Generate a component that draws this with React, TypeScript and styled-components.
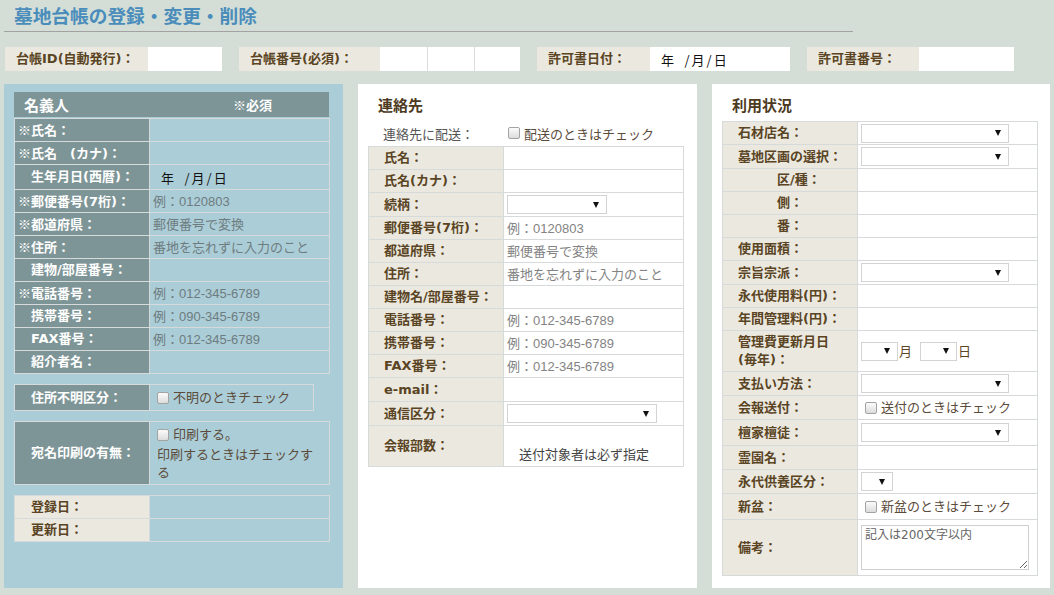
import React from 'react';
import styled, { createGlobalStyle } from 'styled-components';

const GlobalStyle = createGlobalStyle`
  html, body { margin: 0; padding: 0; }
  body {
    background: #d4ded7;
    font-family: "Liberation Sans", "Noto Sans CJK JP", sans-serif;
    font-size: 13px;
    color: #333;
  }
`;

const BROWN = '#5a4424';
const LINE = '#d6dada';
const LABEL_FONT = '"DejaVu Sans", "Noto Sans CJK JP", sans-serif';

const Page = styled.div`
  width: 1054px;
  height: 595px;
  padding-left: 4px;
  box-sizing: border-box;
  overflow: hidden;
`;

const Title = styled.h1`
  margin: 0;
  width: 839px;
  padding: 6px 0 3px 10px;
  font-size: 18.7px;
  line-height: 22px;
  font-weight: bold;
  color: #4a8dbb;
  border-bottom: 1px solid #a2a2a2;
`;

const TopBar = styled.div`
  display: flex;
  gap: 17px;
  margin-top: 15px;
  padding-left: 1px;
  height: 24px;
`;

const TopItem = styled.div`
  display: flex;
`;

const TopLabel = styled.div<{ $w: number }>`
  width: ${p => p.$w}px;
  box-sizing: border-box;
  padding-left: 11px;
  background: #ebe9df;
  color: ${BROWN};
  font-family: ${LABEL_FONT};
  font-weight: bold;
  line-height: 24px;
  white-space: nowrap;
`;

const TopValue = styled.div<{ $w: number }>`
  display: flex;
  align-items: center;
  width: ${p => p.$w}px;
  background: #fff;
  padding-left: 3px;
  box-sizing: border-box;
`;

const Segments = styled.div`
  display: flex;
  gap: 1px;
  background: #dcdcdc;
`;

const Columns = styled.div`
  display: flex;
  gap: 15px;
  margin-top: 13px;
  height: 504px;
`;

const LeftPanel = styled.section`
  width: 339px;
  box-sizing: border-box;
  padding: 8px 14px 0 10px;
  background: #abcdd7;
`;

const WhitePanel = styled.section<{ $w: number }>`
  width: ${p => p.$w}px;
  box-sizing: border-box;
  padding: 12px 0 0 10px;
  background: #fff;
`;

const PanelHeader = styled.div`
  display: flex;
  align-items: center;
  height: 25px;
  margin-bottom: 1px;
  padding-left: 10px;
  background: #7e9597;
  color: #fff;
  font-weight: bold;
`;

const HeaderName = styled.span`
  width: 209px;
  font-size: 15px;
`;

const HeaderNote = styled.span`
  font-size: 13px;
`;

const PanelTitle = styled.h2`
  margin: 0 0 0 10px;
  font-size: 15px;
  line-height: 20px;
  font-weight: bold;
  color: #4d3a1e;
`;

const DeliveryRow = styled.div`
  display: flex;
  align-items: center;
  height: 18px;
  margin: 8px 0 4px 15px;
  color: #555;
`;

const DeliveryLabel = styled.span`
  width: 125px;
`;

const FormGrid = styled.div<{ $w?: number; $gap?: number }>`
  display: grid;
  grid-template-columns: 135px 1fr;
  width: ${p => p.$w ?? 315}px;
  margin-top: ${p => p.$gap ?? 0}px;
  border-top: 1px solid ${LINE};
  border-left: 1px solid ${LINE};
`;

const Label = styled.div<{ $tone: 'slate' | 'beige'; $indent: number; $h: number }>`
  display: flex;
  align-items: center;
  min-height: ${p => p.$h}px;
  padding-left: ${p => p.$indent}px;
  background: ${p => (p.$tone === 'slate' ? '#7e9597' : '#ebe9df')};
  color: ${p => (p.$tone === 'slate' ? '#fff' : BROWN)};
  font-family: ${LABEL_FONT};
  font-weight: bold;
  line-height: 18px;
  white-space: nowrap;
  border-right: 1px solid ${LINE};
  border-bottom: 1px solid ${LINE};
`;

const Mark = styled.span`
  font-family: "Noto Sans CJK JP", sans-serif;
`;

const Value = styled.div<{ $white: boolean; $pad: number; $align: string; $h: number }>`
  display: flex;
  flex-wrap: wrap;
  align-items: ${p => p.$align};
  align-content: ${p => p.$align};
  min-height: ${p => p.$h}px;
  padding: 0 3px 0 ${p => p.$pad}px;
  box-sizing: border-box;
  background: ${p => (p.$white ? '#fff' : 'transparent')};
  border-right: 1px solid ${LINE};
  border-bottom: 1px solid ${LINE};
  line-height: 17px;
`;

const Hint = styled.span<{ $onBlue?: boolean }>`
  color: ${p => (p.$onBlue ? '#6e7c80' : '#838383')};
  white-space: nowrap;
`;

const DateText = styled.span`
  color: #111;
  margin-left: 8px;
  letter-spacing: 2px;
  white-space: pre;
  font-family: "Noto Sans CJK JP", sans-serif;
`;

const CheckText = styled.span`
  display: inline-flex;
  align-items: center;
  color: #5b4b3b;
  white-space: nowrap;
`;

const Check = styled.span`
  display: inline-block;
  width: 12px;
  height: 12px;
  box-sizing: border-box;
  margin-right: 4px;
  border: 1px solid #a3a3a3;
  border-radius: 2px;
  background: linear-gradient(#fbfbfb, #dcdcdc);
`;

const PrintNote = styled.div`
  width: 162px;
  padding: 4px 0 2px;
  color: #5b4b3b;
  line-height: 18px;
`;

const Select = styled.div<{ $w: number }>`
  display: flex;
  align-items: center;
  justify-content: flex-end;
  width: ${p => p.$w}px;
  height: 19px;
  box-sizing: border-box;
  padding-right: 7px;
  border: 1px solid #d3d3d3;
  background: #fff;
  &::after {
    content: '';
    border-left: 3.5px solid transparent;
    border-right: 3.5px solid transparent;
    border-top: 6px solid #111;
  }
`;

const Unit = styled.span`
  color: #5b4424;
  margin: 0 8px 0 1px;
`;

const SendNote = styled.span`
  color: #444;
  margin-bottom: 3px;
`;

const Memo = styled.textarea`
  width: 168px;
  height: 45px;
  box-sizing: border-box;
  margin: 0;
  padding: 1px 3px;
  border: 1px solid #cfcfcf;
  font-family: "DejaVu Sans", "Noto Sans CJK JP", sans-serif;
  font-size: 12px;
  line-height: 16px;
  color: #555;
  &::placeholder { color: #666; }
`;

type FieldProps = {
  label: React.ReactNode;
  tone?: 'slate' | 'beige';
  indent?: number;
  white?: boolean;
  pad?: number;
  align?: string;
  h?: number;
  children?: React.ReactNode;
};

function Field({ label, tone = 'beige', indent = 15, white = true, pad = 3, align = 'center', h = 22, children }: FieldProps) {
  return (
    <>
      <Label $tone={tone} $indent={indent} $h={h}>{label}</Label>
      <Value $white={white} $pad={pad} $align={align} $h={h}>{children}</Value>
    </>
  );
}

const L = (props: FieldProps) => <Field tone="slate" white={false} indent={3} {...props} />;

const Req = ({ children }: { children: React.ReactNode }) => (
  <span><Mark>※</Mark>{children}</span>
);

const DATE = '年\u2002/月/日';

export default function App() {
  return (
    <>
      <GlobalStyle />
      <Page>
        <Title>墓地台帳の登録・変更・削除</Title>

        <TopBar>
          <TopItem>
            <TopLabel $w={143}>台帳ID(自動発行)：</TopLabel>
            <TopValue $w={74} />
          </TopItem>
          <TopItem>
            <TopLabel $w={141}>台帳番号(必須)：</TopLabel>
            <Segments>
              <TopValue $w={47} />
              <TopValue $w={46} />
              <TopValue $w={45} />
            </Segments>
          </TopItem>
          <TopItem>
            <TopLabel $w={113}>許可書日付：</TopLabel>
            <TopValue $w={140}><DateText>{DATE}</DateText></TopValue>
          </TopItem>
          <TopItem>
            <TopLabel $w={112}>許可書番号：</TopLabel>
            <TopValue $w={95} />
          </TopItem>
        </TopBar>

        <Columns>
          <LeftPanel>
            <PanelHeader>
              <HeaderName>名義人</HeaderName>
              <HeaderNote>※必須</HeaderNote>
            </PanelHeader>
            <FormGrid>
              <L label={<Req>氏名：</Req>} />
              <L label={<Req>氏名　(カナ)：</Req>} />
              <L label="生年月日(西暦)：" indent={16} h={24}><DateText>{DATE}</DateText></L>
              <L label={<Req>郵便番号(7桁)：</Req>}><Hint $onBlue>例：0120803</Hint></L>
              <L label={<Req>都道府県：</Req>}><Hint $onBlue>郵便番号で変換</Hint></L>
              <L label={<Req>住所：</Req>}><Hint $onBlue>番地を忘れずに入力のこと</Hint></L>
              <L label="建物/部屋番号：" indent={16} />
              <L label={<Req>電話番号：</Req>}><Hint $onBlue>例：012-345-6789</Hint></L>
              <L label="携帯番号：" indent={16}><Hint $onBlue>例：090-345-6789</Hint></L>
              <L label="FAX番号：" indent={16}><Hint $onBlue>例：012-345-6789</Hint></L>
              <L label="紹介者名：" indent={16} />
            </FormGrid>

            <FormGrid $w={299} $gap={10}>
              <L label="住所不明区分：" indent={16} h={25} pad={7}>
                <CheckText><Check />不明のときチェック</CheckText>
              </L>
            </FormGrid>

            <FormGrid $gap={10}>
              <L label="宛名印刷の有無：" indent={16} h={60} pad={7} align="flex-start">
                <PrintNote>
                  <CheckText><Check />印刷する。</CheckText>
                  <br />
                  印刷するときはチェックする
                </PrintNote>
              </L>
            </FormGrid>

            <FormGrid $gap={10}>
              <Field label="登録日：" indent={16} white={false} />
              <Field label="更新日：" indent={16} white={false} />
            </FormGrid>
          </LeftPanel>

          <WhitePanel $w={339}>
            <PanelTitle>連絡先</PanelTitle>
            <DeliveryRow>
              <DeliveryLabel>連絡先に配送：</DeliveryLabel>
              <CheckText><Check />配送のときはチェック</CheckText>
            </DeliveryRow>
            <FormGrid>
              <Field label="氏名：" />
              <Field label="氏名(カナ)：" />
              <Field label="続柄：" h={23}><Select $w={100} /></Field>
              <Field label="郵便番号(7桁)："><Hint>例：0120803</Hint></Field>
              <Field label="都道府県："><Hint>郵便番号で変換</Hint></Field>
              <Field label="住所："><Hint>番地を忘れずに入力のこと</Hint></Field>
              <Field label="建物名/部屋番号：" />
              <Field label="電話番号："><Hint>例：012-345-6789</Hint></Field>
              <Field label="携帯番号："><Hint>例：090-345-6789</Hint></Field>
              <Field label="FAX番号："><Hint>例：012-345-6789</Hint></Field>
              <Field label="e-mail：" h={23} />
              <Field label="通信区分：" h={23}><Select $w={150} /></Field>
              <Field label="会報部数：" h={40} pad={15} align="flex-end">
                <SendNote>送付対象者は必ず指定</SendNote>
              </Field>
            </FormGrid>
          </WhitePanel>

          <WhitePanel $w={338}>
            <PanelTitle>利用状況</PanelTitle>
            <FormGrid $gap={5}>
              <Field label="石材店名：" h={22}><Select $w={148} /></Field>
              <Field label="墓地区画の選択：" h={23}><Select $w={148} /></Field>
              <Field label="区/種：" indent={54} />
              <Field label="側：" indent={54} />
              <Field label="番：" indent={54} />
              <Field label="使用面積：" />
              <Field label="宗旨宗派：" h={23}><Select $w={148} /></Field>
              <Field label="永代使用料(円)：" />
              <Field label="年間管理料(円)：" />
              <Field label={<span>管理費更新月日<br />(毎年)：</span>} h={40}>
                <Select $w={37} /><Unit>月</Unit>
                <Select $w={37} /><Unit>日</Unit>
              </Field>
              <Field label="支払い方法：" h={23}><Select $w={148} /></Field>
              <Field label="会報送付：" h={23} pad={7}>
                <CheckText><Check />送付のときはチェック</CheckText>
              </Field>
              <Field label="檀家檀徒：" h={25}><Select $w={148} /></Field>
              <Field label="霊園名：" h={23} />
              <Field label="永代供養区分：" h={23}><Select $w={32} /></Field>
              <Field label="新盆：" h={25} pad={7}>
                <CheckText><Check />新盆のときはチェック</CheckText>
              </Field>
              <Field label="備考：" h={55}>
                <Memo placeholder="記入は200文字以内" />
              </Field>
            </FormGrid>
          </WhitePanel>
        </Columns>
      </Page>
    </>
  );
}
